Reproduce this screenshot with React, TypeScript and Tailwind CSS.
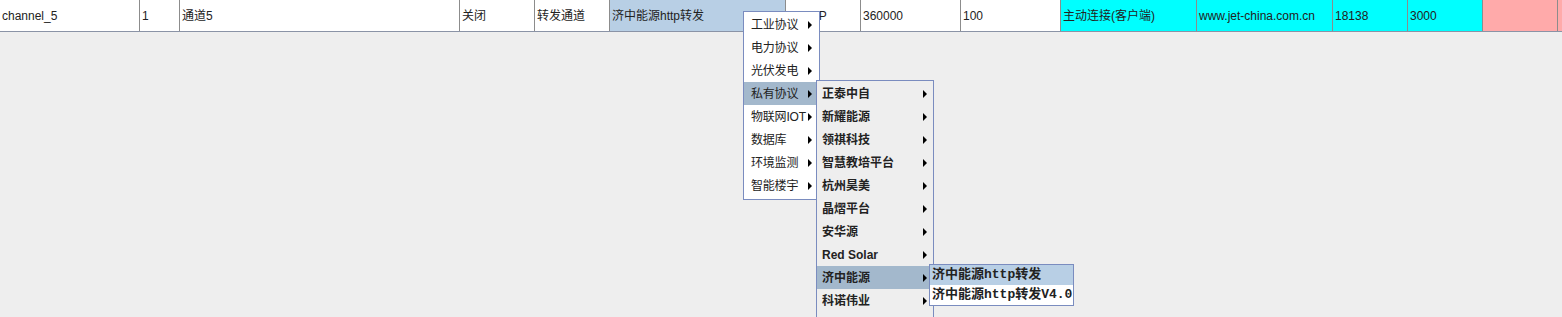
const cells: { w: number; text: string; bg?: string }[] = [
  { w: 140, text: "channel_5" },
  { w: 40, text: "1" },
  { w: 280, text: "通道5" },
  { w: 75, text: "关闭" },
  { w: 75, text: "转发通道" },
  { w: 176, text: "济中能源http转发", bg: "bg-[#b8cfe5]" },
  { w: 75, text: "TCP/IP" },
  { w: 100, text: "360000" },
  { w: 100, text: "100" },
  { w: 136, text: "主动连接(客户端)", bg: "bg-[#00ffff]" },
  { w: 136, text: "www.jet-china.com.cn", bg: "bg-[#00ffff]" },
  { w: 75, text: "18138", bg: "bg-[#00ffff]" },
  { w: 75, text: "3000", bg: "bg-[#00ffff]" },
  { w: 75, text: "", bg: "bg-[#ffaaaa]" },
];

const menu1 = ["工业协议", "电力协议", "光伏发电", "私有协议", "物联网IOT", "数据库", "环境监测", "智能楼宇"];
const menu2 = ["正泰中自", "新耀能源", "领祺科技", "智慧教培平台", "杭州昊美", "晶熠平台", "安华源", "Red Solar", "济中能源", "科诺伟业"];

function Arrow() {
  return <span className="w-0 h-0 shrink-0 border-y-[4px] border-y-transparent border-l-[4px] border-l-black" />;
}

export default function App() {
  return (
    <div
      className="relative h-[317px] w-[1562px] overflow-hidden bg-[#eeeeee] text-[12px] text-[#222]"
      style={{ fontFamily: '"Liberation Sans", "Noto Sans CJK SC", sans-serif' }}
    >
      <div className="flex h-[32px] border-b border-[#8a93a6] bg-white">
        {cells.map((c, i) => (
          <div
            key={i}
            className={`flex items-center pl-[2px] border-r border-[#8c8c8c] shrink-0 whitespace-nowrap overflow-hidden ${c.bg ?? ""}`}
            style={{ width: c.w }}
          >
            {c.text}
          </div>
        ))}
        <div className="flex-1 bg-[#ffaaaa]" />
      </div>

      {/* popup menus */}
      <div className="absolute left-[743px] top-[11px] w-[77px] border border-[#7a8cbf] bg-white pt-[1px] pb-[2px]">
        {menu1.map((m, i) => (
          <div
            key={m}
            className={`flex h-[23px] items-center justify-between pl-[7px] pr-[7px] ${i === 3 ? "bg-[#a3b8cc]" : ""}`}
          >
            <span className="whitespace-nowrap tracking-[-0.2px]">{m}</span>
            <Arrow />
          </div>
        ))}
      </div>

      <div className="absolute left-[816px] top-[80px] w-[118px] border border-[#7a8cbf] bg-[#eeeeee] pt-[1px] pb-[40px] font-semibold">
        {menu2.map((m, i) => (
          <div
            key={m}
            className={`flex h-[23px] items-center justify-between pl-[5px] pr-[6px] ${i === 8 ? "bg-[#a3b8cc]" : ""}`}
          >
            <span className="whitespace-nowrap">{m}</span>
            <Arrow />
          </div>
        ))}
      </div>

      <div
        className="absolute left-[929px] top-[264px] w-[145px] border border-[#7a8cbf] bg-white text-[13px] font-bold text-[#222]"
        style={{ fontFamily: '"Liberation Mono", "Noto Sans CJK SC", monospace' }}
      >
        <div className="flex h-[20px] items-center bg-[#b8cfe5] pl-[2px] whitespace-nowrap">济中能源http转发</div>
        <div className="flex h-[20px] items-center pl-[2px] whitespace-nowrap">济中能源http转发V4.0</div>
      </div>
    </div>
  );
}
